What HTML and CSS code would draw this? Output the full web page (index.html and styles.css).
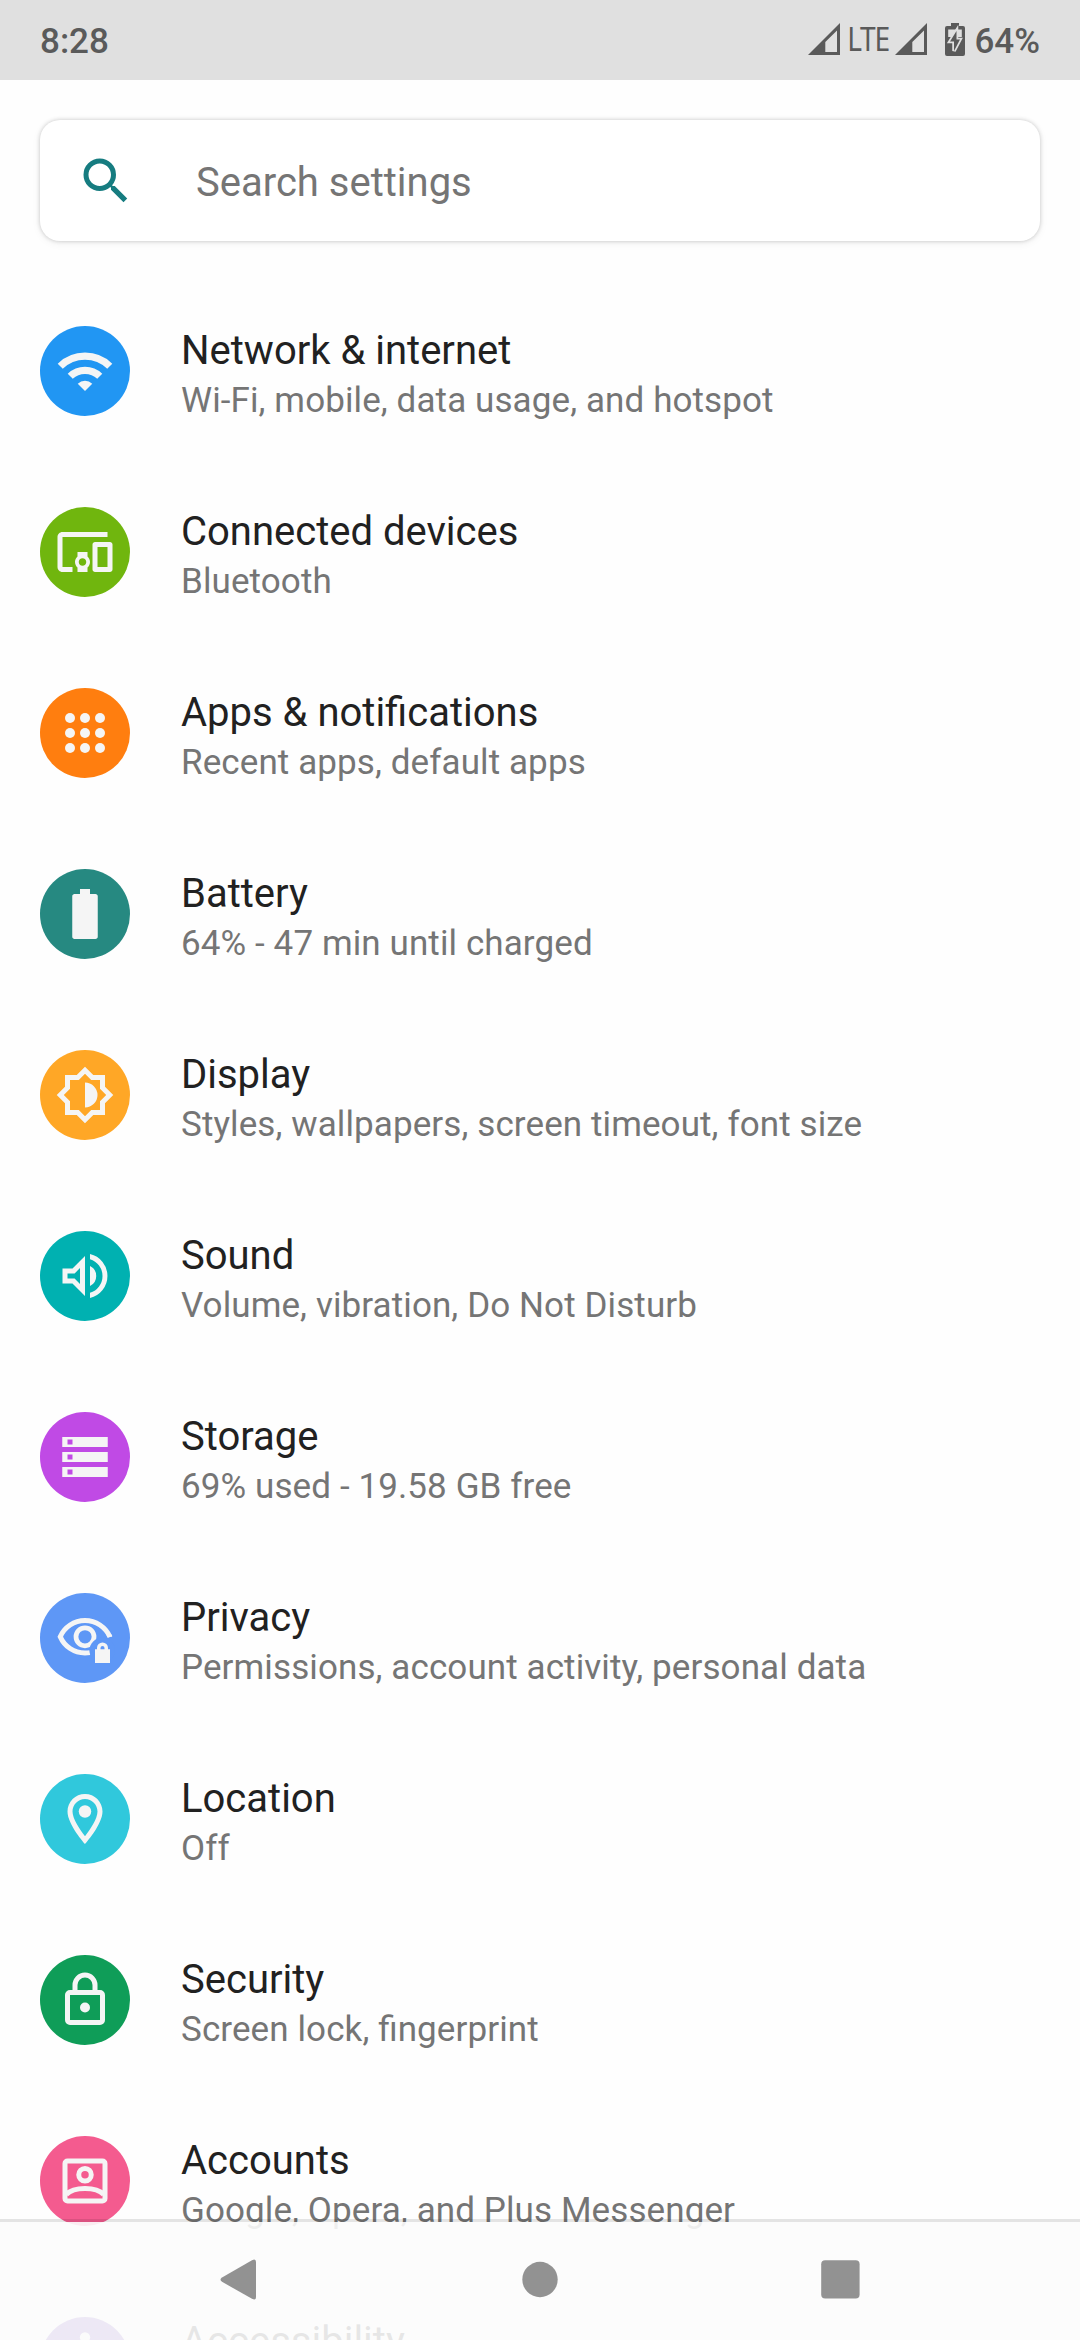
FILE: index.html
```html
<!DOCTYPE html>
<html lang="en">
<head>
<meta charset="utf-8">
<title>Settings</title>
<link rel="stylesheet" href="styles.css">
</head>
<body>
<div class="screen">
  <header class="status">
    <span class="clock">8:28</span>
    <div class="indicators">
      <svg class="signal" viewBox="0 0 32 32"><path fill-rule="evenodd" d="M32 0V32H0ZM29 7.5 17.300 19V29H29Z"/></svg>
      <span class="lte">LTE</span>
      <svg class="signal" viewBox="0 0 32 32"><path fill-rule="evenodd" d="M32 0V32H0ZM29 7.5 17.300 19V29H29Z"/></svg>
      <svg class="charge" viewBox="0 0 20 33"><path d="M6 0h8v3h4a2 2 0 0 1 2 2v26a2 2 0 0 1-2 2H2a2 2 0 0 1-2-2V5a2 2 0 0 1 2-2h4z"/><path class="gap" d="M3.200 6.500h13.600V14H3.200z"/><path class="halo" d="M11.500 8 5 18.500h4V28l6-11.500h-3.500z"/><path d="M11.500 8 5 18.500h4V28l6-11.500h-3.500z"/></svg>
      <span class="percent">64%</span>
    </div>
  </header>

  <div class="search">
    <svg class="search-icon" viewBox="0 0 24 24"><path d="M15.500 14h-.790l-.280-.270A6.471 6.471 0 0 0 16 9.500 6.500 6.500 0 1 0 9.500 16c1.610 0 3.090-.590 4.230-1.570l.270.280v.790l5 4.990L20.490 19l-4.990-5zm-6 0C7.010 14 5 11.990 5 9.500S7.010 5 9.500 5 14 7.010 14 9.500 11.990 14 9.500 14z"/></svg>
    <span class="search-text">Search settings</span>
  </div>

  <main class="list">
    <div class="row">
      <span class="badge network"><svg class="glyph" viewBox="0 0 24 24"><g fill="none" stroke="#f5f5f5" stroke-width="2.900"><path d="M2.100 10.100a14.200 14.200 0 0 1 19.800 0"/><path d="M6.100 14.100a8.500 8.500 0 0 1 11.800 0"/></g><path d="M9.100 17.050a4.250 4.250 0 0 1 5.800 0L12 19.950z"/></svg></span>
      <div class="text"><div class="title">Network &amp; internet</div><div class="sub">Wi-Fi, mobile, data usage, and hotspot</div></div>
    </div>
    <div class="row">
      <span class="badge devices"><svg class="glyph" viewBox="0 0 24 24"><path d="M3 6h18V4H3c-1.100 0-2 .900-2 2v12c0 1.100.900 2 2 2h4v-2H3V6zm10 6H9v1.780c-.610.550-1 1.330-1 2.220s.390 1.670 1 2.220V20h4v-1.780c.610-.550 1-1.340 1-2.220s-.390-1.670-1-2.220V12zm-2 5.500c-.830 0-1.500-.670-1.500-1.500s.670-1.500 1.500-1.500 1.500.670 1.500 1.500-.670 1.500-1.500 1.500zM22 8h-6c-.500 0-1 .500-1 1v10c0 .500.500 1 1 1h6c.500 0 1-.500 1-1V9c0-.500-.500-1-1-1zm-1 10h-4v-8h4v8z"/></svg></span>
      <div class="text"><div class="title">Connected devices</div><div class="sub">Bluetooth</div></div>
    </div>
    <div class="row">
      <span class="badge apps"><svg class="glyph" viewBox="0 0 24 24"><circle cx="6" cy="6" r="2"/><circle cx="12" cy="6" r="2"/><circle cx="18" cy="6" r="2"/><circle cx="6" cy="12" r="2"/><circle cx="12" cy="12" r="2"/><circle cx="18" cy="12" r="2"/><circle cx="6" cy="18" r="2"/><circle cx="12" cy="18" r="2"/><circle cx="18" cy="18" r="2"/></svg></span>
      <div class="text"><div class="title">Apps &amp; notifications</div><div class="sub">Recent apps, default apps</div></div>
    </div>
    <div class="row">
      <span class="badge battery"><svg class="glyph" viewBox="0 0 24 24"><path d="M16.200 4H14V2h-4v2H7.800c-.500 0-.900.400-.900.900v16.200c0 .500.400.900.900.900h8.400c.500 0 .900-.400.900-.900V4.900c0-.500-.400-.900-.900-.900z"/></svg></span>
      <div class="text"><div class="title">Battery</div><div class="sub">64% - 47 min until charged</div></div>
    </div>
    <div class="row">
      <span class="badge display"><svg class="glyph" viewBox="0 0 24 24"><path fill-rule="evenodd" d="M20 15.310 23.310 12 20 8.690V4h-4.690L12 .690 8.690 4H4v4.690L.690 12 4 15.310V20h4.690L12 23.310 15.310 20H20zM18 14.480V18h-3.520L12 20.480 9.520 18H6v-3.520L3.520 12 6 9.520V6h3.520L12 3.520 14.480 6H18v3.520L20.480 12zM12 7v10a5 5 0 0 0 0-10z"/></svg></span>
      <div class="text"><div class="title">Display</div><div class="sub">Styles, wallpapers, screen timeout, font size</div></div>
    </div>
    <div class="row">
      <span class="badge sound"><svg class="glyph" viewBox="0 0 24 24"><path fill-rule="evenodd" d="M12 4 7 9H3v6h4l5 5zM10 8.830v6.340L7.830 13H5v-2h2.830zM14 3.230v2.060a7 7 0 0 1 0 13.420v2.060a9 9 0 0 0 0-17.540zM14 7.970v8.050a4.500 4.500 0 0 0 0-8.050z"/></svg></span>
      <div class="text"><div class="title">Sound</div><div class="sub">Volume, vibration, Do Not Disturb</div></div>
    </div>
    <div class="row">
      <span class="badge storage"><svg class="glyph" viewBox="0 0 24 24"><path fill-rule="evenodd" d="M2.900 20h18.200v-4H2.900zM5 17h2v2H5zM2.900 4v4h18.200V4zM7 7H5V5h2zM2.900 14h18.200v-4H2.900zM5 11h2v2H5z"/></svg></span>
      <div class="text"><div class="title">Storage</div><div class="sub">69% used - 19.58 GB free</div></div>
    </div>
    <div class="row">
      <span class="badge privacy"><svg class="glyph" viewBox="0 0 24 24"><g fill="none" stroke="#f5f5f5" stroke-width="2"><path d="M22 11.600C20.200 7.600 16.400 5 12 5S3.800 7.600 2.100 11.500C3.800 15.400 7.600 18 12 18q1 0 2-.150"/><circle cx="12" cy="11.500" r="3.600" stroke-width="1.900"/></g><path d="M20.900 11.500h2c-.100-.400-.200-.600-.400-1h-2z"/><circle cx="18.900" cy="17" r="5.100" fill="#5e97f6"/><path fill-rule="evenodd" d="M21.200 16.500V16a2.200 2.200 0 0 0-4.400 0v.500H16V22h6v-5.500zM18.200 16.500V16a.800.800 0 0 1 1.600 0v.500z"/></svg></span>
      <div class="text"><div class="title">Privacy</div><div class="sub">Permissions, account activity, personal data</div></div>
    </div>
    <div class="row">
      <span class="badge location"><svg class="glyph" viewBox="0 0 24 24"><path d="M12 2C8.130 2 5 5.130 5 9c0 5.250 7 13 7 13s7-7.750 7-13c0-3.870-3.130-7-7-7zM7 9c0-2.760 2.240-5 5-5s5 2.240 5 5c0 2.880-2.880 7.190-5 9.880C9.920 16.210 7 11.850 7 9z"/><circle cx="12" cy="9" r="2.500"/></svg></span>
      <div class="text"><div class="title">Location</div><div class="sub">Off</div></div>
    </div>
    <div class="row">
      <span class="badge security"><svg class="glyph" viewBox="0 0 24 24"><path fill-rule="evenodd" d="M18 8h-1V6A5 5 0 0 0 7 6v2H6a2 2 0 0 0-2 2v10a2 2 0 0 0 2 2h12a2 2 0 0 0 2-2V10a2 2 0 0 0-2-2zM9 6a3 3 0 0 1 6 0v2H9zM18 20H6V10h12z"/><circle cx="12" cy="15" r="2"/></svg></span>
      <div class="text"><div class="title">Security</div><div class="sub">Screen lock, fingerprint</div></div>
    </div>
    <div class="row">
      <span class="badge accounts"><svg class="glyph" viewBox="0 0 24 24"><g fill="none" stroke="#f5f5f5" stroke-width="2"><rect x="4" y="4" width="16" height="16" rx="1"/><circle cx="12" cy="9.500" r="2.500"/><path d="M4.500 17.400C6 15.800 9 15 12 15s6 .800 7.500 2.400"/></g></svg></span>
      <div class="text"><div class="title">Accounts</div><div class="sub">Google, Opera, and Plus Messenger</div></div>
    </div>
    <div class="row">
      <span class="badge access"><svg class="glyph" viewBox="0 0 24 24"><circle cx="12" cy="2.100" r="2.050"/><path d="M21 9h-6v13h-2v-6h-2v6H9V9H3V7h18z"/></svg></span>
      <div class="text"><div class="title">Accessibility</div></div>
    </div>
  </main>

  <nav class="navbar">
    <svg class="key" viewBox="0 0 60 60"><path d="M12 27.500 42 10.200Q46 8 46 12V47Q46 51 42 48.800L12 31.800Q9 29.600 12 27.500z"/></svg>
    <svg class="key" viewBox="0 0 60 60"><circle cx="30" cy="29.500" r="17.700"/></svg>
    <svg class="key" viewBox="0 0 60 60"><rect x="11.200" y="10.200" width="38.400" height="38.400" rx="4"/></svg>
  </nav>
</div>
</body>
</html>
```
FILE: styles.css
```css
body {
  margin: 0;
  background: #fefefe;
  font-family: Roboto, sans-serif;
}

.screen {
  position: relative;
  width: 1080px;
  height: 2340px;
  overflow: hidden;
}

.status {
  display: flex;
  justify-content: space-between;
  box-sizing: border-box;
  height: 80px;
  padding: 0 40px;
  background: #e0e0e0;
  color: #5a5a5a;
  fill: #5a5a5a;
  font-size: 35px;
  font-weight: 500;
  line-height: 83px;
}

.indicators {
  display: flex;
}

.signal {
  width: 32px;
  height: 32px;
  margin-top: 23px;
}

.lte {
  width: 55px;
  box-sizing: border-box;
  padding-left: 7px;
  font-family: "Noto Sans", sans-serif;
  font-size: 32px;
  font-weight: 400;
  line-height: 78px;
  letter-spacing: -1.5px;
  transform: scaleX(0.88);
  transform-origin: 9px 50%;
}

.charge {
  width: 20px;
  height: 33px;
  margin: 23px 9px 0 18px;
}

.gap {
  fill: #e0e0e0;
}

.halo {
  fill: none;
  stroke: #e0e0e0;
  stroke-width: 3.500px;
}

.search {
  display: flex;
  box-sizing: border-box;
  width: 1000px;
  height: 121px;
  margin: 40px auto 0;
  padding-left: 36px;
  border-radius: 20px;
  background: #fff;
  box-shadow: 0 0 4px rgba(0, 0, 0, 0.2), 0 2px 10px rgba(0, 0, 0, 0.06);
}

.search-icon {
  width: 60px;
  height: 60px;
  margin-top: 31px;
  fill: #167c80;
}

.search-text {
  margin-left: 60px;
  color: #757575;
  font-size: 40px;
  line-height: 126px;
}

.list {
  padding: 85px 40px 0;
}

.row {
  display: flex;
  gap: 51px;
  height: 181px;
}

.badge {
  display: flex;
  align-items: center;
  justify-content: center;
  flex: none;
  width: 90px;
  height: 90px;
  border-radius: 50%;
}

.glyph {
  width: 60px;
  height: 60px;
  fill: #f5f5f5;
  overflow: visible;
}

.network { background: #2196f3; }
.devices { background: #70b60e; }
.apps { background: #ff7e0f; }
.battery { background: #268981; }
.display { background: #ffa726; }
.sound { background: #00b1b1; }
.storage { background: #c04ae5; }
.privacy { background: #5e97f6; }
.location { background: #30c8dc; }
.security { background: #0f9d58; }
.accounts { background: #f45b8f; }
.access { background: #673ab7; }

.text {
  padding-top: 1px;
}

.title {
  color: #212121;
  font-size: 40px;
  line-height: 48px;
  white-space: nowrap;
}

.sub {
  margin-top: 5px;
  color: #757575;
  font-size: 35px;
  line-height: 42px;
  letter-spacing: 0.1px;
  font-feature-settings: "liga" 1;
  white-space: nowrap;
}

.navbar {
  position: absolute;
  left: 0;
  bottom: 0;
  display: flex;
  justify-content: center;
  gap: 240px;
  box-sizing: border-box;
  width: 1080px;
  height: 121px;
  padding-top: 28px;
  border-top: 3px solid rgba(0, 0, 0, 0.1);
  background: rgba(252, 252, 252, 0.9);
  background-clip: padding-box;
}

.key {
  width: 60px;
  height: 60px;
  fill: #929292;
}
```
